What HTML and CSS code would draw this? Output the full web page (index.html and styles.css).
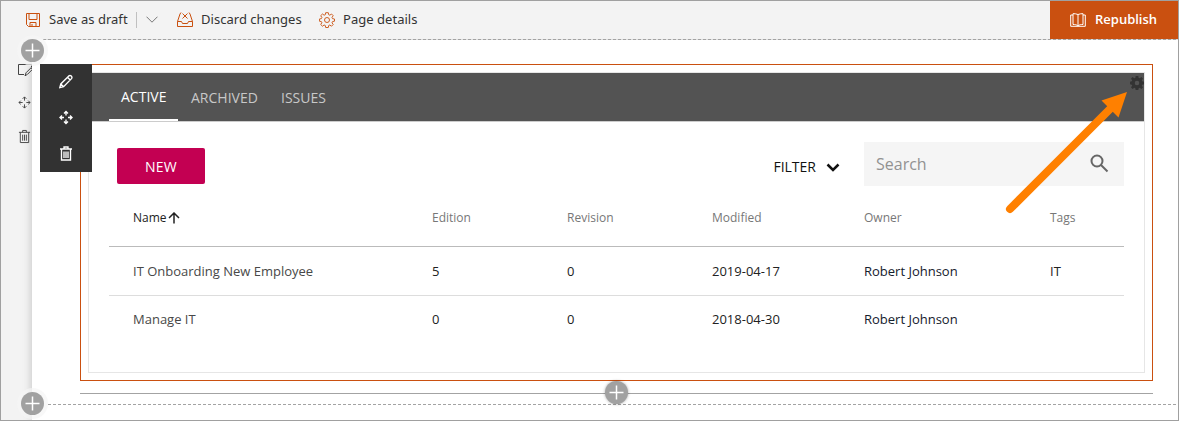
FILE: index.html
```html
<!DOCTYPE html>
<html lang="en">
<head>
<meta charset="utf-8">
<title>Page editor</title>
<link rel="stylesheet" href="styles.css">
</head>
<body>
<svg class="defs" width="0" height="0">
  <symbol id="move" viewBox="0 0 14 14"><path d="M7 1v4M7 9v4M1 7h4M9 7h4M5 3l2-2 2 2M5 11l2 2 2-2M3 5L1 7l2 2M11 5l2 2-2 2"/></symbol>
  <symbol id="trash" viewBox="0 0 14 14"><path d="M1 2.5h12M5 2.5v-2h4v2M2.500 2.500v11h9v-11M5 5v6.500M7 5v6.500M9 5v6.500"/></symbol>
  <symbol id="plus" viewBox="0 0 23 23"><path d="M11.500 4.500v14M4.500 11.500h14"/></symbol>
</svg>
<div class="window">
  <header class="toolbar">
    <button class="command save"><svg class="icon" viewBox="0 0 14 14"><path d="M.5 .5h13v13H2.500l-2-2zM3 .5v6h8v-6M4 13.500v-4h6v4M6 11v2.500"/></svg><span>Save as draft</span></button>
    <span class="divider"></span>
    <button class="command more"><svg viewBox="0 0 12 7"><path d="M.5 .7L6 6.200 11.500 .7"/></svg></button>
    <button class="command discard"><svg class="icon" viewBox="0 0 16 15"><path d="M.5 9.500h4l1 2h5l1-2h4v5H.5zM.5 9.500L3 2l1-1.500M15.500 9.500L13 2l-1-1.500M5.500 1.500l5 5M10.500 1.500l-5 5"/></svg><span>Discard changes</span></button>
    <button class="command details"><svg class="icon" viewBox="0 0 16 16"><circle cx="8" cy="8" r="2.500"/><path d="M6.700 .7h2.600l.4 2 1.100.5 1.700-1.200 1.700 1.700-1.200 1.700.5 1.200 2 .4v2.200l-2 .4-.5 1.200 1.200 1.700-1.700 1.700-1.700-1.200-1.100.5-.4 2H6.700l-.4-2-1.200-.5-1.600 1.200-1.800-1.700L2.900 10.800l-.5-1.200-2-.4V7l2-.4.5-1.200-1.200-1.700L3.500 2l1.600 1.200 1.200-.5z"/></svg><span>Page details</span></button>
    <button class="republish"><svg viewBox="0 0 16 14"><path d="M8 1.500v11M8 1.500C6.500.8 4.500.6 3 .7v10.800c2 0 3.800.2 5 1.500 1.200-1.300 3-1.500 5-1.500V.7C11.500.6 9.500.8 8 1.500M3 2H.7v11.300h14.600V2H13"/></svg><span>Republish</span></button>
  </header>
  <div class="workspace">
    <nav class="rail">
      <svg class="edit" viewBox="0 0 15 13"><path d="M6 10.500H.5V.5h13v3M7 11.800l1-3 5-5 1.500 1.500-5 5z"/></svg>
      <svg class="move"><use href="#move"/></svg>
      <svg class="trash"><use href="#trash"/></svg>
    </nav>
    <main class="page">
      <section class="zone">
        <div class="webpart">
          <div class="panel">
            <nav class="tabs"><a class="tab active"><span>ACTIVE</span></a><a class="tab"><span>ARCHIVED</span></a><a class="tab"><span>ISSUES</span></a></nav>
            <div class="actions">
              <button class="new">NEW</button>
              <div class="filter"><span>FILTER</span><svg viewBox="0 0 14 9"><path d="M1.500 1.500L7 7l5.500-5.500"/></svg></div>
              <div class="search"><span>Search</span><svg viewBox="0 0 19 19"><circle cx="7" cy="7" r="5.500"/><path d="M11 11l6.500 6.500"/></svg></div>
            </div>
            <div class="table">
              <div class="row head"><span class="sorted">Name<svg viewBox="0 0 12 12"><path d="M6 11.500V1M1 6l5-5 5 5"/></svg></span><span>Edition</span><span>Revision</span><span>Modified</span><span>Owner</span><span>Tags</span></div>
              <div class="row"><span class="name">IT Onboarding New Employee</span><span>5</span><span>0</span><span>2019-04-17</span><span class="owner">Robert Johnson</span><span>IT</span></div>
              <div class="row"><span class="name">Manage IT</span><span>0</span><span>0</span><span>2018-04-30</span><span class="owner">Robert Johnson</span><span></span></div>
            </div>
          </div>
        </div>
        <div class="insert-line"></div>
      </section>
    </main>
  </div>
  <div class="part-tools">
    <svg viewBox="0 0 14 14"><path d="M.8 13.200l1-3.800L9.800 1.400q1.300-1 2.500.2t.2 2.500L4.600 12.200zM8.500 2.700l2.700 2.700M1.800 9.400l2.800 2.800"/></svg>
    <svg><use href="#move"/></svg>
    <svg><use href="#trash"/></svg>
  </div>
  <svg class="settings" viewBox="0 0 14 14"><path fill-rule="evenodd" d="M5.700 0h2.600l.4 1.900 1 .4L11.400 1 13 2.700l-1.200 1.600.4 1 1.800.4v2.600l-1.800.4-.4 1L13 11.300 11.400 13l-1.700-1.200-1 .4-.4 1.800H5.700l-.4-1.800-1-.4L2.600 13 1 11.300l1.200-1.600-.4-1L0 8.300V5.700l1.800-.4.4-1L1 2.700 2.600 1l1.700 1.300 1-.4zM7 4.700a2.300 2.300 0 100 4.600 2.300 2.300 0 000-4.600"/></svg>
  <svg class="pointer" viewBox="0 0 130 130"><path class="shaft" d="M11 119L114 16"/><path class="tip" d="M128 2L102.500 10.500l17 17z"/></svg>
  <button class="add top"><svg><use href="#plus"/></svg></button>
  <button class="add bottom"><svg><use href="#plus"/></svg></button>
  <button class="add middle"><svg><use href="#plus"/></svg></button>
</div>
</body>
</html>
```
FILE: styles.css
```css
* { box-sizing: border-box; }
body { margin: 0; font-family: "Open Sans", sans-serif; background: #fff; }
button { border: 0; padding: 0; margin: 0; background: none; font: inherit; color: inherit; }
svg { display: block; flex: none; fill: none; stroke: currentColor; }
.defs { position: absolute; }
.window { position: relative; width: 1179px; height: 421px; border: 1px solid #a0a0a0; overflow: hidden; display: flex; flex-direction: column; }
.toolbar { height: 38px; flex: none; background: #f3f3f3; display: flex; align-items: center; padding-left: 25px; font: 14px "Noto Sans", sans-serif; color: #333; }
.command, .republish { display: flex; align-items: center; white-space: nowrap; }
.icon { color: #c9500f; stroke-width: 1; }
.save { gap: 9px; width: 110px; }
.save .icon { width: 14px; height: 14px; }
.command span { font-size: 13px; padding-bottom: 2px; letter-spacing: .03px; }
.command .icon { margin-bottom: 1px; }
.divider { width: 1px; height: 16px; background: #c0c0c0; }
.more { width: 40px; padding-left: 9px; color: #777; }
.more svg { width: 12px; height: 7px; margin-bottom: 1px; }
.discard { gap: 8px; width: 142px; }
.discard .icon { width: 16px; height: 15px; }
.details { gap: 8px; }
.details .icon { width: 16px; height: 16px; stroke-width: .9; }
.republish { margin-left: auto; align-self: stretch; width: 128px; padding-left: 20px; gap: 9px; background: #ca5010; color: #fff; font: 600 13px "Open Sans", sans-serif; }
.republish span { padding-bottom: 2px; }
.republish svg { width: 16px; height: 14px; margin-bottom: 1px; }
.workspace { flex: 1; display: flex; background: #f3f3f3; }
.rail { width: 31px; padding: 25px 0 0 17px; color: #444; }
.rail .edit { width: 15px; height: 13px; }
.rail .move { width: 13px; height: 13px; margin-top: 19px; }
.rail .trash { width: 13px; height: 15px; margin-top: 20px; }
.page { flex: 1; background: #fff; box-shadow: 0 0 9px rgba(0,0,0,.22); clip-path: inset(0 0 0 -12px); }
.zone { height: 366px; padding: 25px 24px 0 48px; background: repeating-linear-gradient(90deg, #a3a3a3 0 3px, #dedede 3px 5px) 11px 0 / 1135px 1px no-repeat, repeating-linear-gradient(90deg, #a3a3a3 0 3px, #fff 3px 5px) 16px 365px / 1130px 1px no-repeat; }
.webpart { width: 1073px; height: 317px; border: 1px solid #ca5010; padding: 7px; }
.panel { height: 301px; border: 1px solid #e6e6e6; }
.tabs { height: 49px; background: #535353; display: flex; padding-left: 20px; border-bottom: 1px solid #ccc; font-size: 14px; line-height: 49px; color: #c8c8c8; }
.tab { height: 48px; padding: 0 12px; }
.tab.active { width: 69px; line-height: 47px; color: #fff; border-bottom: 2px solid #fff; }
.tab:nth-child(2) { width: 91px; padding-left: 13px; }
.actions { height: 65px; padding: 20px 20px 0 28px; display: flex; align-items: flex-start; }
.new { width: 88px; height: 36px; margin-top: 6px; border-radius: 2px; background: #c30052; color: #fff; font-size: 14px; font-weight: 500; letter-spacing: .2px; }
.filter { display: flex; align-items: center; gap: 10px; margin: 15px 24px 0 auto; font-size: 14px; line-height: 20px; color: #111; }
.filter svg { width: 14px; height: 9px; stroke-width: 2.500; }
.search { width: 260px; height: 44px; background: #f5f5f5; display: flex; align-items: center; justify-content: space-between; padding: 0 15px 0 12px; color: #929292; font-size: 16px; }
.search svg { width: 19px; height: 19px; color: #666; stroke-width: 2; margin-bottom: 1px; }
.table { margin: 0 20px; font-size: 13px; color: #222; }
.row { height: 49px; display: grid; grid-template-columns: 299px 135px 145px 152px 186px 1fr; padding-left: 24px; line-height: 48px; border-bottom: 1px solid #ddd; }
.row:last-child { border: 0; line-height: 46px; }
.head { height: 60px; font-size: 12px; line-height: 62px; color: #777; border-color: #bbb; }
.head span { height: 60px; }
.sorted { display: flex; align-items: center; gap: 1px; padding-top: 2px; color: #222; }
.sorted svg { width: 12px; height: 12px; stroke-width: 1.500; margin-bottom: 1px; }
.name { color: #484848; }
.owner { color: #14202c; }
.insert-line { width: 1073px; height: 1px; margin-top: 12px; background: #a3a3a3; }
.part-tools { position: absolute; left: 39px; top: 63px; width: 52px; height: 108px; padding: 10px 0 11px; background: #323232; color: #fff; display: flex; flex-direction: column; align-items: center; justify-content: space-between; }
.part-tools svg { width: 14px; height: 15px; stroke-width: 1.350; }
.settings { position: absolute; left: 1129px; top: 75px; width: 14px; height: 14px; color: #333; fill: currentColor; stroke: none; }
.pointer { position: absolute; left: 998px; top: 89px; width: 130px; height: 130px; color: #ff8000; }
.shaft { stroke-width: 8; stroke-linecap: round; }
.tip { fill: currentColor; stroke: none; }
.add { position: absolute; width: 23px; height: 23px; border-radius: 50%; background: #a1a1a1; color: #fff; box-shadow: 0 0 0 4px rgba(245,245,245,.7); }
.add svg { width: 23px; height: 23px; stroke-width: 1.500; }
.add.top { left: 20px; top: 38px; }
.add.bottom { left: 20px; top: 391px; }
.add.middle { left: 604px; top: 380px; box-shadow: 0 0 3px rgba(0,0,0,.35); }
```
